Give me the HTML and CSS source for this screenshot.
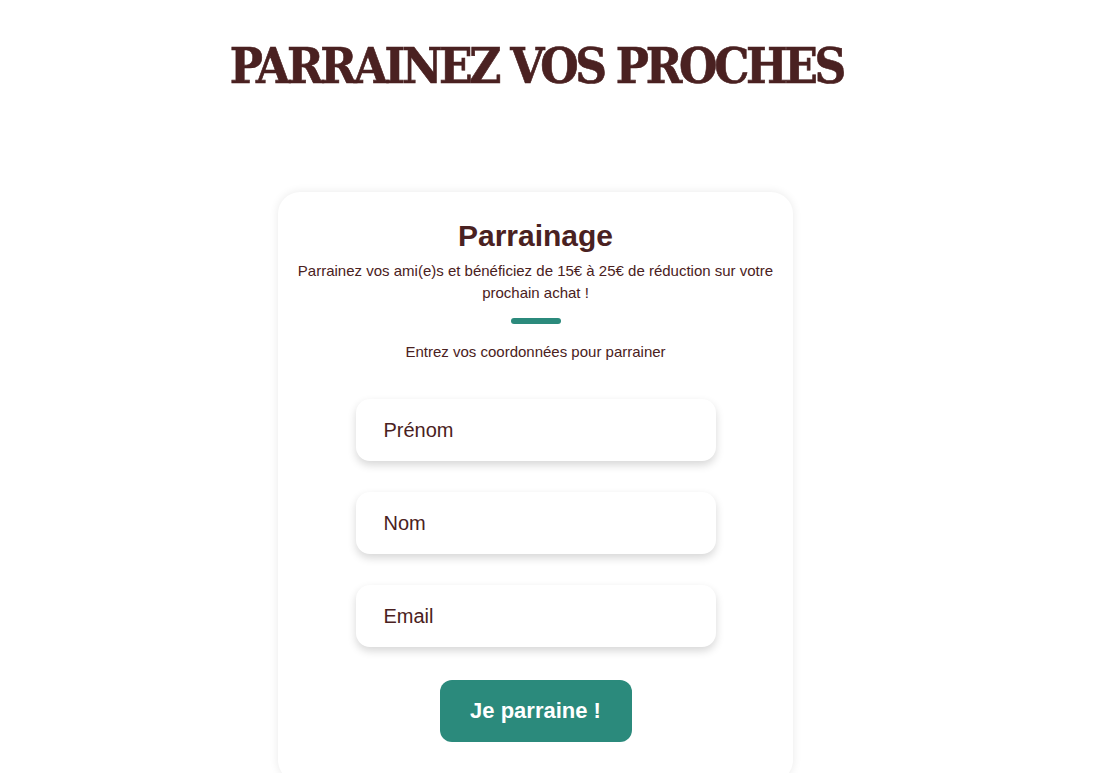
FILE: index.html
```html
<!DOCTYPE html>
<html lang="fr">
<head>
    <meta charset="UTF-8">
    <meta name="viewport" content="width=device-width, initial-scale=1.0">
    <title>Parrainez vos proches</title>
    <link rel="stylesheet" href="styles.css">
</head>
<body>

    <div class="page">
        <h1 class="page-title">PARRAINEZ VOS PROCHES</h1>

        <div class="card">
            <h2>Parrainage</h2>
            <p class="intro">Parrainez vos ami(e)s et bénéficiez de 15€ à 25€ de réduction sur votre prochain achat !</p>
            <div class="divider"></div>
            <p class="hint">Entrez vos coordonnées pour parrainer</p>

            <form class="form">
                <input type="text" class="field" placeholder="Prénom">
                <input type="text" class="field" placeholder="Nom">
                <input type="email" class="field" placeholder="Email">
                <button type="button" class="submit">Je parraine !</button>
            </form>
        </div>
    </div>

</body>
</html>
```

FILE: styles.css
```css
body {
    margin: 0;
    font-family: "Liberation Sans", Arial, sans-serif;
    color: #4a2121;
    background: #fff;
    overflow: hidden;
}
.page {
    width: 1071px;
    display: flex;
    flex-direction: column;
    align-items: center;
}
.page-title {
    margin: 37px 0 0;
    padding-left: 2px;
    font-family: "DejaVu Serif Condensed", "DejaVu Serif", serif;
    font-weight: bold;
    font-size: 49px;
    line-height: 58px;
    letter-spacing: -3.3px;
    -webkit-text-stroke: 0.6px #4a2121;
    color: #4a2121;
}
.card {
    margin-top: 97px;
    width: 515px;
    box-sizing: border-box;
    padding: 26px 14px 40px;
    border-radius: 22px;
    box-shadow: 0 0 10px rgba(0, 0, 0, 0.09);
    text-align: center;
}
.card h2 {
    margin: 0;
    font-size: 30px;
    line-height: 36px;
}
.intro {
    margin: 6px 0 0;
    font-size: 15px;
    line-height: 22px;
}
.divider {
    width: 50px;
    height: 6px;
    border-radius: 3px;
    background: #2b8a7c;
    margin: 14px auto 0;
}
.hint {
    margin: 19px 0 0;
    font-size: 15px;
    line-height: 18px;
}
.form {
    margin-top: 38px;
    display: flex;
    flex-direction: column;
    align-items: center;
    gap: 31px;
}
.field {
    width: 360px;
    height: 62px;
    box-sizing: border-box;
    padding: 0 28px;
    border: none;
    border-radius: 14px;
    background: #fff;
    box-shadow: 0 4px 8px rgba(0, 0, 0, 0.16);
    font-family: inherit;
    font-size: 20px;
    color: #4a2121;
    outline: none;
}
.field::placeholder {
    color: #4a2121;
}
.submit {
    margin-top: 2px;
    width: 192px;
    height: 62px;
    border: none;
    border-radius: 12px;
    background: #2b8a7c;
    color: #fff;
    font-family: inherit;
    font-weight: bold;
    font-size: 22px;
    cursor: pointer;
}
```
